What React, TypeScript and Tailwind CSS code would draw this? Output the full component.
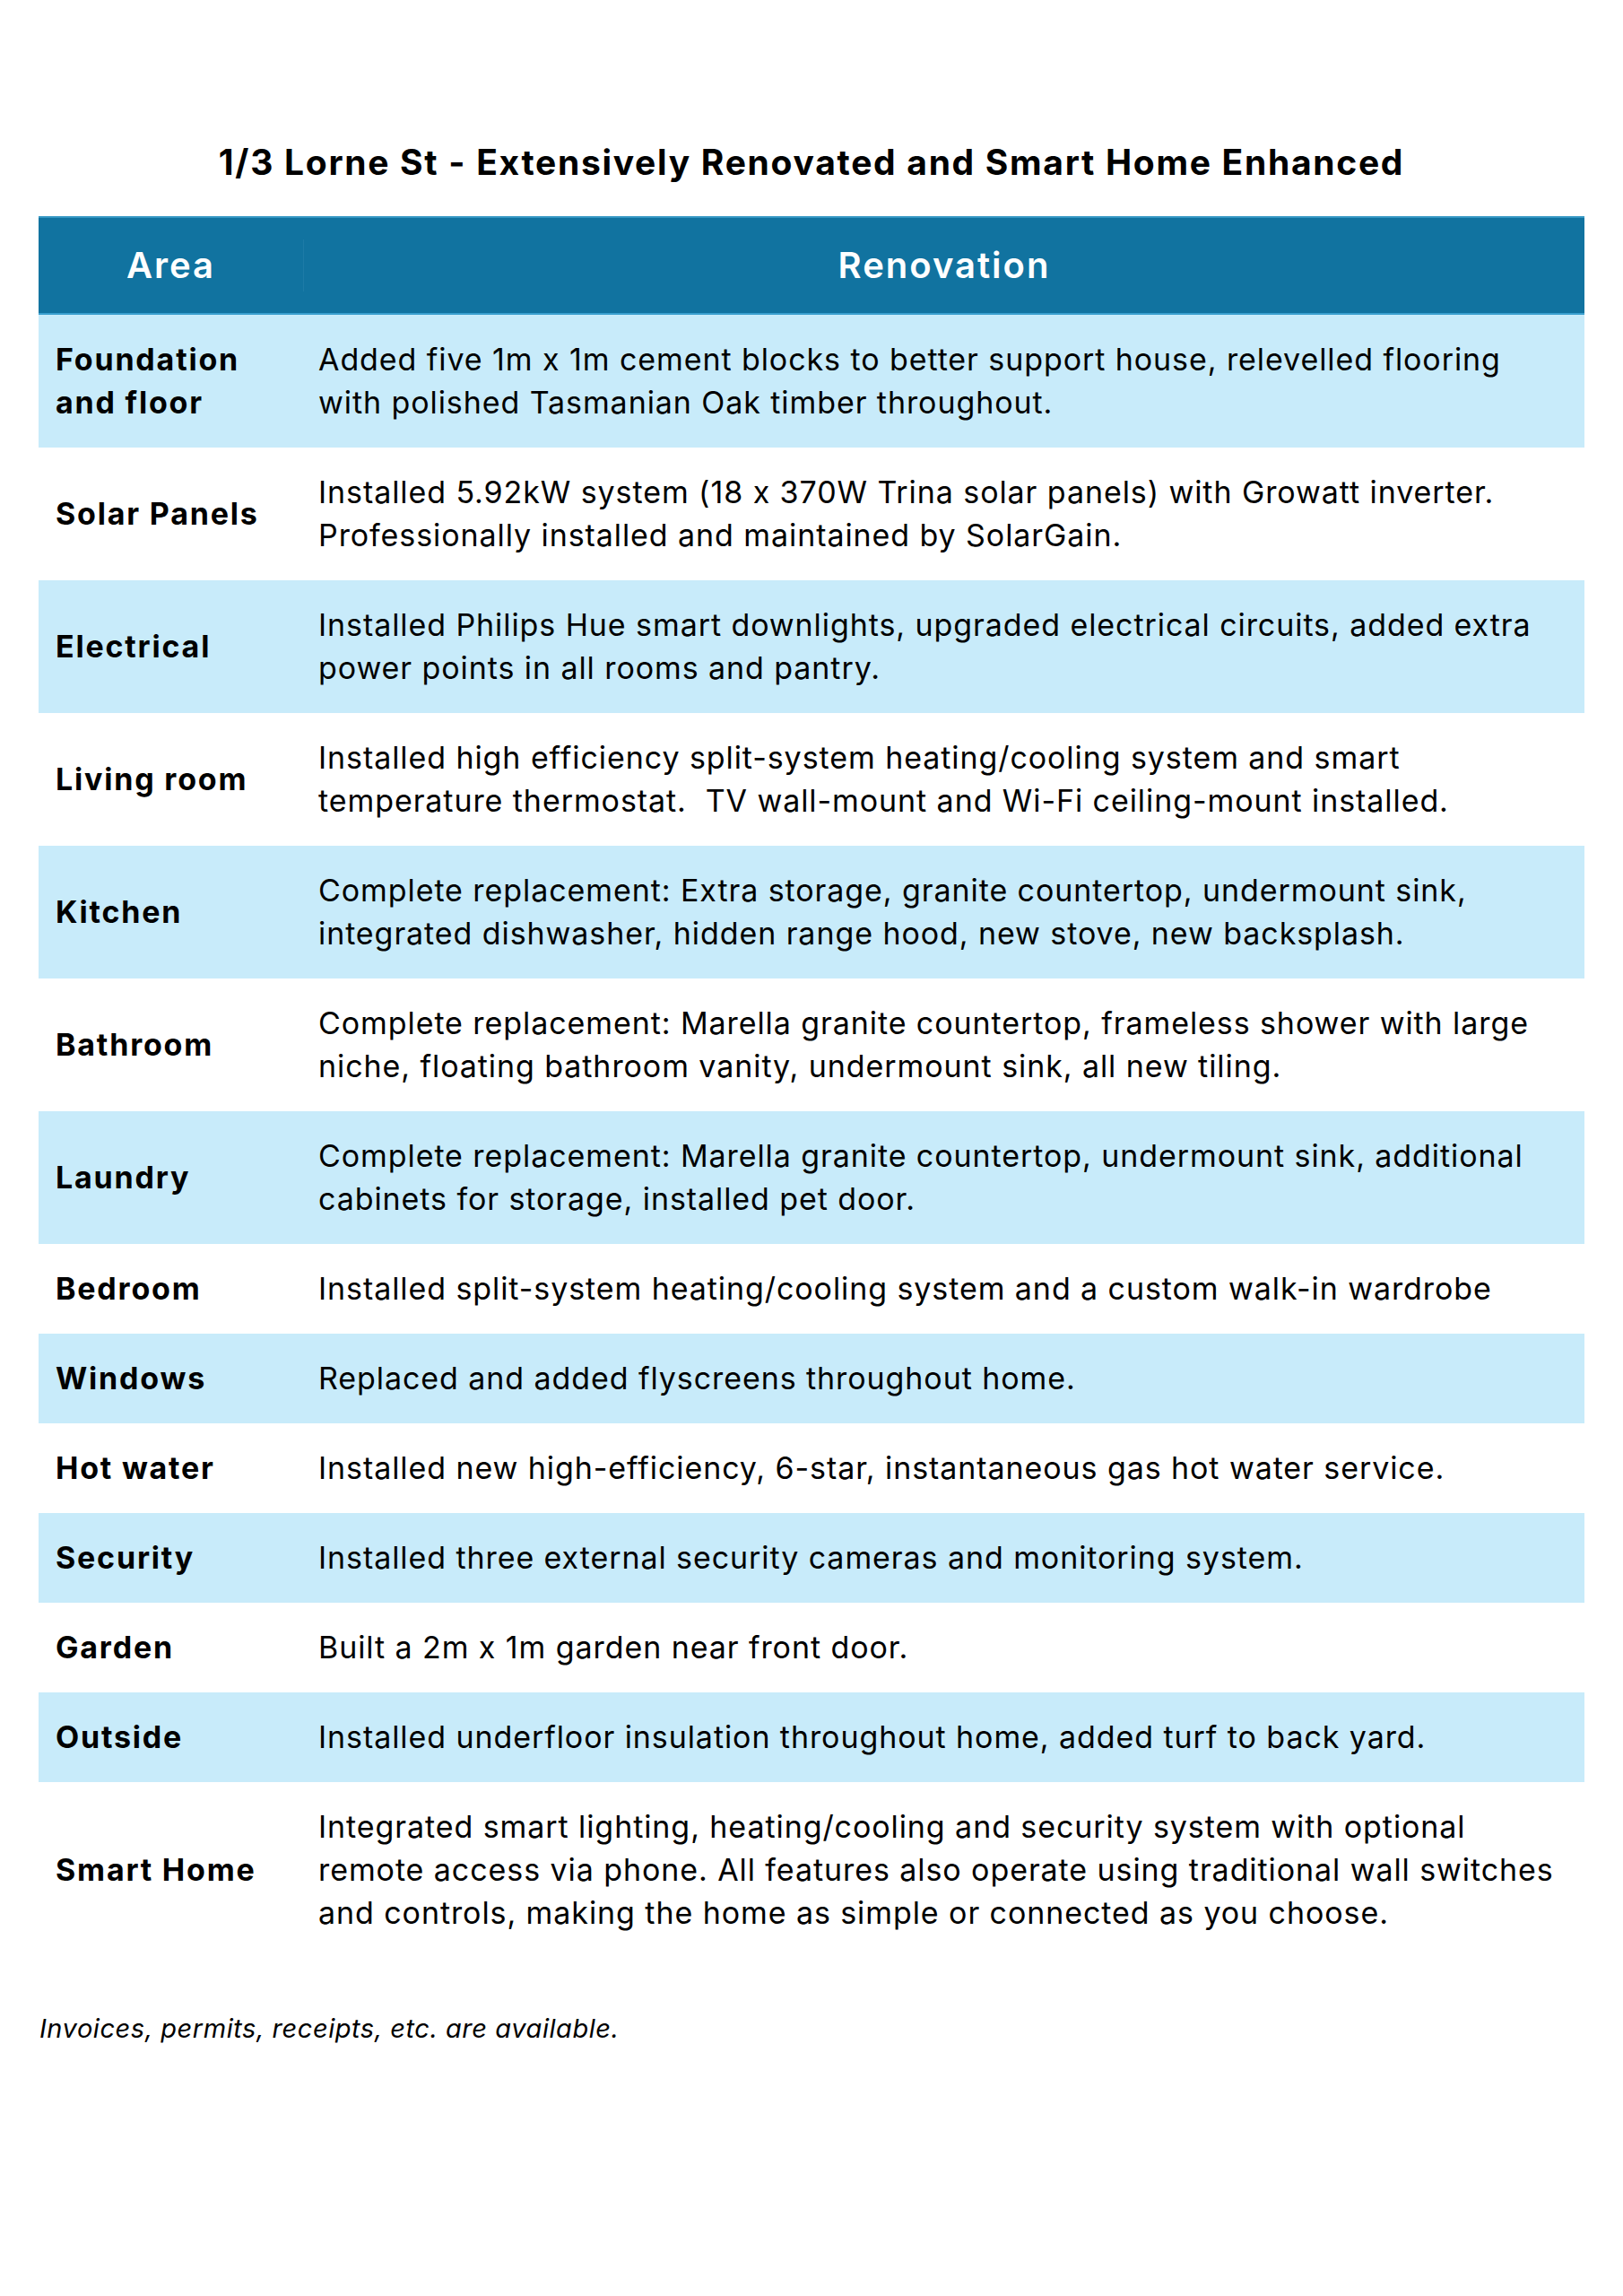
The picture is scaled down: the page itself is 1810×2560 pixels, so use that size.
const rows: { area: string[]; lines: string[] }[] = [
  {
    area: ["Foundation", "and floor"],
    lines: [
      "Added five 1m x 1m cement blocks to better support house, relevelled flooring",
      "with polished Tasmanian Oak timber throughout.",
    ],
  },
  {
    area: ["Solar Panels"],
    lines: [
      "Installed 5.92kW system (18 x 370W Trina solar panels) with Growatt inverter.",
      "Professionally installed and maintained by SolarGain.",
    ],
  },
  {
    area: ["Electrical"],
    lines: [
      "Installed Philips Hue smart downlights, upgraded electrical circuits, added extra",
      "power points in all rooms and pantry.",
    ],
  },
  {
    area: ["Living room"],
    lines: [
      "Installed high efficiency split-system heating/cooling system and smart",
      "temperature thermostat.  TV wall-mount and Wi-Fi ceiling-mount installed.",
    ],
  },
  {
    area: ["Kitchen"],
    lines: [
      "Complete replacement: Extra storage, granite countertop, undermount sink,",
      "integrated dishwasher, hidden range hood, new stove, new backsplash.",
    ],
  },
  {
    area: ["Bathroom"],
    lines: [
      "Complete replacement: Marella granite countertop, frameless shower with large",
      "niche, floating bathroom vanity, undermount sink, all new tiling.",
    ],
  },
  {
    area: ["Laundry"],
    lines: [
      "Complete replacement: Marella granite countertop, undermount sink, additional",
      "cabinets for storage, installed pet door.",
    ],
  },
  { area: ["Bedroom"], lines: ["Installed split-system heating/cooling system and a custom walk-in wardrobe"] },
  { area: ["Windows"], lines: ["Replaced and added flyscreens throughout home."] },
  { area: ["Hot water"], lines: ["Installed new high-efficiency, 6-star, instantaneous gas hot water service."] },
  { area: ["Security"], lines: ["Installed three external security cameras and monitoring system."] },
  { area: ["Garden"], lines: ["Built a 2m x 1m garden near front door."] },
  { area: ["Outside"], lines: ["Installed underfloor insulation throughout home, added turf to back yard."] },
  {
    area: ["Smart Home"],
    lines: [
      "Integrated smart lighting, heating/cooling and security system with optional",
      "remote access via phone. All features also operate using traditional wall switches",
      "and controls, making the home as simple or connected as you choose.",
    ],
  },
]

export default function App() {
  return (
    <div className="w-[1810px] h-[2560px] bg-white text-black font-['Inter','Liberation_Sans',sans-serif] [font-feature-settings:'calt'_0]">
      <h1 className="pt-[157px] text-center text-[39px] leading-[48px] font-bold tracking-[1.7px]">
        1/3 Lorne St - Extensively Renovated and Smart Home Enhanced
      </h1>

      <div className="mx-[43px] mt-[36px] w-[1724px]">
        {/* header */}
        <div className="flex h-[110px] bg-[#1173a0] border-t-2 border-t-[#3597c4] border-b-2 border-b-[#3aa0cf] text-white text-[40px] font-semibold tracking-[2px]">
          <div className="w-[295px] flex items-center justify-center">Area</div>
          <div className="flex-1 flex items-center justify-center border-l border-[#1d7ba7] my-[24px]">Renovation</div>
        </div>

        {rows.map((row, i) => (
          <div
            key={row.area.join(" ")}
            className={`flex py-[26px] text-[34px] leading-[48px] ${i % 2 === 0 ? "bg-[#c8ebfa]" : "bg-white"}`}
          >
            <div className="w-[295px] shrink-0 pl-[19px] flex flex-col justify-center font-bold tracking-[1.8px]">
              {row.area.map((a) => (
                <span key={a}>{a}</span>
              ))}
            </div>
            <div className="flex-1 pl-[17px] tracking-[0.92px]">
              {row.lines.map((line) => (
                <p key={line} className="whitespace-pre">
                  {line}
                </p>
              ))}
            </div>
          </div>
        ))}
      </div>

      <p className="ml-[44px] mt-[61px] text-[29px] leading-[36px] italic tracking-[0.55px]">
        Invoices, permits, receipts, etc. are available.
      </p>
    </div>
  )
}
